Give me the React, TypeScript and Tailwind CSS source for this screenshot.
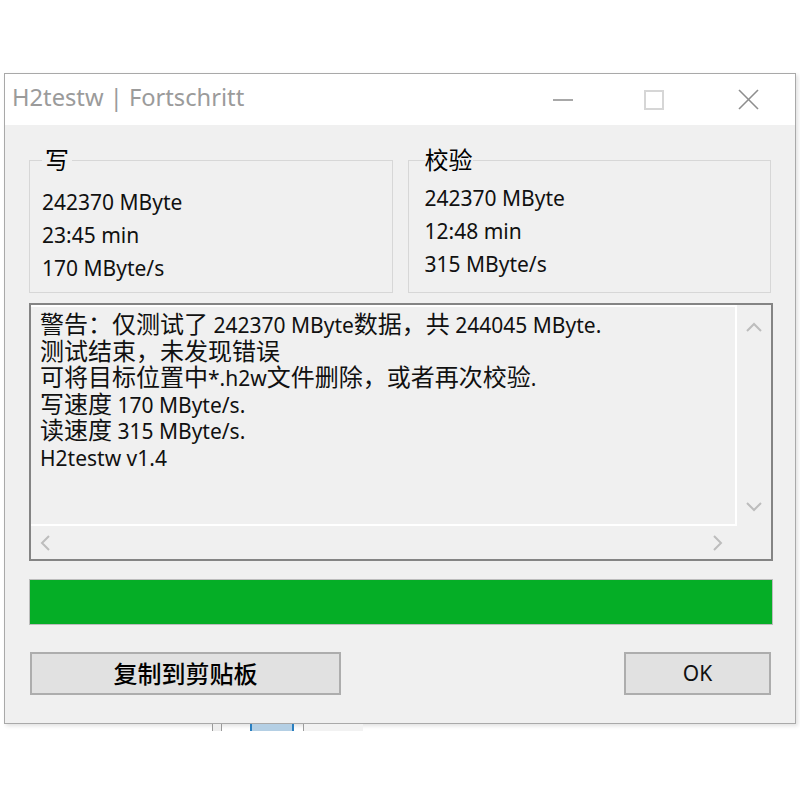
const C = ({ children }: { children: React.ReactNode }) => (
  <span className="inline-block text-[24px] leading-[24px]">{children}</span>
)

const Chevron = ({ dir }: { dir: 'up' | 'down' | 'left' | 'right' }) => {
  const vertical = dir === 'up' || dir === 'down'
  const points = {
    up: '1,9 8,2 15,9',
    down: '1,1 8,8 15,1',
    left: '9,1 2,8 9,15',
    right: '1,1 8,8 1,15',
  }[dir]
  return (
    <svg
      width={vertical ? 16 : 10}
      height={vertical ? 10 : 16}
      viewBox={vertical ? '0 0 16 10' : '0 0 10 16'}
      fill="none"
      stroke="#bdbdbd"
      strokeWidth="2"
    >
      <polyline points={points} />
    </svg>
  )
}

const GroupBox = ({
  title,
  lines,
  pad,
  legendPad,
}: {
  title: string
  lines: string[]
  pad: string
  legendPad: string
}) => (
  <fieldset className={`h-[145px] border border-[#d7d7d7] ${pad}`}>
    <legend className={`text-[24px] leading-[24px] text-black ${legendPad}`}>{title}</legend>
    {lines.map((line) => (
      <div key={line} className="leading-[33px] text-[21px] text-[#111]">
        {line}
      </div>
    ))}
  </fieldset>
)

export default function App() {
  return (
    <div className="min-h-[800px] bg-white font-['Noto_Sans','Noto_Sans_CJK_SC',sans-serif]">
      <div className="pt-[73px] pl-1">
        <div className="w-[792px] h-[651px] border border-[#a9a9a9] bg-[#f0f0f0] flex flex-col shadow-[2px_2px_4px_rgba(0,0,0,0.12)]">
          {/* title bar */}
          <div className="h-[51px] bg-white flex items-center">
            <div className="flex-1 pl-[7px] pb-[3px] text-[23.7px] text-[#9b9b9b]">H2testw | Fortschritt</div>
            <div className="w-[94px] h-full flex items-center justify-center pl-[6px]">
              <div className="w-[20px] h-[2px] bg-[#a8a8a8]" />
            </div>
            <div className="w-[94px] h-full flex items-center justify-center">
              <div className="w-[20px] h-[20px] border-2 border-[#d6d6d6]" />
            </div>
            <div className="w-[94px] h-full flex items-center justify-center">
              <svg width="21" height="21" viewBox="0 0 21 21" stroke="#8e8e8e" strokeWidth="1.6">
                <line x1="1" y1="1" x2="20" y2="20" />
                <line x1="20" y1="1" x2="1" y2="20" />
              </svg>
            </div>
          </div>

          {/* body */}
          <div className="flex-1 pt-[23px] pl-6 pr-[22px] flex flex-col">
            <div className="grid grid-cols-2 gap-[15px] mr-[2px]">
              <GroupBox
                title="写"
                lines={['242370 MByte', '23:45 min', '170 MByte/s']}
                pad="pl-3 pt-[14px]"
                legendPad="px-[3px]"
              />
              <GroupBox
                title="校验"
                lines={['242370 MByte', '12:48 min', '315 MByte/s']}
                pad="pl-4 pt-[10px]"
                legendPad="px-0"
              />
            </div>

            <div className="mt-[10px] h-[258px] border-2 border-[#848484] grid grid-cols-[1fr_34px] grid-rows-[1fr_33px]">
              <div className="border-t-2 border-r-2 border-b-2 border-white pl-[9px] pt-[5px] text-[21px] leading-[26.6px] text-[#111] whitespace-nowrap">
                <div>
                  <C>警告：仅测试了</C> 242370 MByte<C>数据，共</C> 244045 MByte.
                </div>
                <div>
                  <C>测试结束，未发现错误</C>
                </div>
                <div>
                  <C>可将目标位置中</C>*.h2w<C>文件删除，或者再次校验</C>.
                </div>
                <div>
                  <C>写速度</C> 170 MByte/s.
                </div>
                <div>
                  <C>读速度</C> 315 MByte/s.
                </div>
                <div>H2testw v1.4</div>
              </div>
              <div className="flex flex-col items-center justify-between pt-[17px] pb-[14px]">
                <Chevron dir="up" />
                <Chevron dir="down" />
              </div>
              <div className="flex items-center justify-between pl-[9px] pr-[14px]">
                <Chevron dir="left" />
                <Chevron dir="right" />
              </div>
              <div />
            </div>

            <div className="mt-[18px] h-[46px] border border-[#bcbcbc] bg-[#e6e6e6]">
              <div className="h-full w-full bg-[#05ae26]" />
            </div>

            <div className="mt-[27px] flex justify-between">
              <button className="ml-px w-[311px] h-[43px] border-2 border-[#adadad] bg-[#e1e1e1] text-[24px] font-medium text-black flex items-center justify-center">
                复制到剪贴板
              </button>
              <button className="mr-[2px] w-[147px] h-[43px] border-2 border-[#adadad] bg-[#e1e1e1] text-[21px] text-[#111] flex items-center justify-center">
                OK
              </button>
            </div>
          </div>
        </div>

        {/* bits of the desktop peeking out below */}
        <div className="flex h-[7px]">
          <div className="ml-[208px] w-[10px] border-x border-[#9a9a9a] bg-[#eeeeee]" />
          <div className="ml-[28px] w-[44px] border-x-2 border-[#2a7fc0] bg-[#b4cfe4]" />
          <div className="ml-[9px] w-[60px] border-l border-[#9c9c9c] bg-[#f2f2f2]" />
        </div>
      </div>
    </div>
  )
}
